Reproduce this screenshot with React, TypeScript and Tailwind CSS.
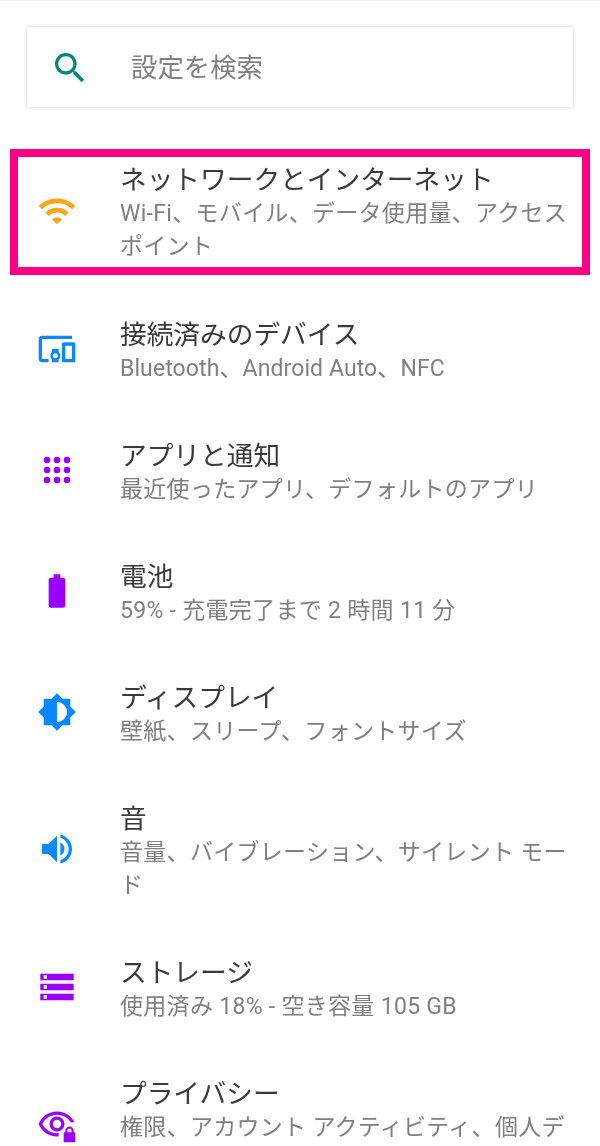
import type { ReactNode } from "react";

const Icon = ({ className, children }: { className: string; children: ReactNode }) => (
  <svg viewBox="0 0 24 24" fill="currentColor" className={className}>
    {children}
  </svg>
);

const blue = "w-10 h-10 text-[#0a88ff]";
const purple = "w-10 h-10 text-[#9900ff]";

const rows = [
  {
    title: "接続済みのデバイス",
    sub: "Bluetooth、Android Auto、NFC",
    subClass: "tracking-[0.1px]",
    icon: (
      <Icon className={blue}>
        <path d="M3 6h18V4H3c-1.1 0-2 .9-2 2v12c0 1.1.9 2 2 2h4v-2H3V6zm10 6H9v1.78c-.61.55-1 1.33-1 2.22s.39 1.67 1 2.22V20h4v-1.78c.61-.55 1-1.34 1-2.22s-.39-1.67-1-2.22V12zm-2 5.5c-.83 0-1.5-.67-1.5-1.5s.67-1.5 1.5-1.5 1.5.67 1.5 1.5-.67 1.5-1.5 1.5zM22 8h-6c-.5 0-1 .5-1 1v10c0 .5.5 1 1 1h6c.5 0 1-.5 1-1V9c0-.5-.5-1-1-1zm-1 10h-4v-8h4v8z" />
      </Icon>
    ),
  },
  {
    title: "アプリと通知",
    sub: "最近使ったアプリ、デフォルトのアプリ",
    icon: (
      <Icon className={purple}>
        {[6, 12, 18].map((y) =>
          [6, 12, 18].map((x) => <circle key={`${x}-${y}`} cx={x} cy={y} r="2" />)
        )}
      </Icon>
    ),
  },
  {
    title: "電池",
    sub: "59% - 充電完了まで 2 時間 11 分",
    icon: (
      <Icon className={purple}>
        <path d="M15.67 4H14V2h-4v2H8.33C7.6 4 7 4.6 7 5.33v15.33C7 21.4 7.6 22 8.33 22h7.33c.74 0 1.34-.6 1.34-1.33V5.33C17 4.6 16.4 4 15.67 4z" />
      </Icon>
    ),
  },
  {
    title: "ディスプレイ",
    sub: "壁紙、スリープ、フォントサイズ",
    icon: (
      <Icon className={blue}>
        <path d="M20 15.31L23.31 12 20 8.69V4h-4.69L12 .69 8.69 4H4v4.69L.69 12 4 15.31V20h4.69L12 23.31 15.31 20H20v-4.69zM12 18V6c3.31 0 6 2.69 6 6s-2.69 6-6 6z" />
      </Icon>
    ),
  },
  {
    title: "音",
    sub: "音量、バイブレーション、サイレント モード",
    icon: (
      <Icon className={blue}>
        <path d="M3 9v6h4l5 5V4L7 9H3zm13.5 3c0-1.77-1.02-3.29-2.5-4.03v8.05c1.48-.73 2.5-2.25 2.5-4.02zM14 3.23v2.06c2.89.86 5 3.54 5 6.71s-2.11 5.85-5 6.71v2.06c4.01-.91 7-4.49 7-8.77s-2.99-7.86-7-8.77z" />
      </Icon>
    ),
  },
  {
    title: "ストレージ",
    sub: "使用済み 18% - 空き容量 105 GB",
    icon: (
      <Icon className={purple}>
        <path d="M2 20h20v-4H2v4zm2-3h2v2H4v-2zM2 4v4h20V4H2zm4 3H4V5h2v2zm-4 7h20v-4H2v4zm2-3h2v2H4v-2z" />
      </Icon>
    ),
  },
  {
    title: "プライバシー",
    sub: "権限、アカウント アクティビティ、個人データ",
    icon: (
      <Icon className={purple}>
        <path d="M12 4.5C7 4.5 2.73 7.61 1 12c1.73 4.39 6 7.5 11 7.5.34 0 .67-.02 1-.05v-2.02c-.33.04-.66.07-1 .07-3.79 0-7.17-2.13-8.82-5.5C4.83 8.63 8.21 6.5 12 6.5c3.4 0 6.47 1.72 8.25 4.5h2.3C20.6 7.2 16.6 4.5 12 4.5z" />
        <path d="M12 7.5a4.5 4.5 0 1 0 0 9 4.5 4.5 0 0 0 0-9zm0 7a2.5 2.5 0 1 1 0-5 2.5 2.5 0 0 1 0 5z" />
        <path d="M22 17v-1a2.5 2.5 0 0 0-5 0v1h-.5a.5.5 0 0 0-.5.5v5a.5.5 0 0 0 .5.5h6a.5.5 0 0 0 .5-.5v-5a.5.5 0 0 0-.5-.5H22zm-1.2 0h-2.6v-1a1.3 1.3 0 0 1 2.6 0v1z" />
      </Icon>
    ),
  },
];

const Text = ({ title, sub, subClass }: { title: string; sub: string; subClass?: string }) => (
  <div className="flex-1 min-w-0">
    <div className="pt-[1px] text-[26.7px] leading-[34px] text-[#3a3a3a]">{title}</div>
    <div className={`text-[23px] leading-[33px] text-[#808080] ${subClass ?? "tracking-[0.3px]"}`}>{sub}</div>
  </div>
);

export default function App() {
  return (
    <div className="w-[600px] h-[1146px] overflow-hidden bg-white border-t border-[#f0f0f0] blur-[0.5px] font-['Roboto','Noto_Sans_CJK_JP',sans-serif]">
      <div className="mx-[27px] mt-[26px] h-[80px] flex items-center bg-white rounded-[2px] shadow-[0_0_4px_rgba(0,0,0,0.2)]">
        <svg viewBox="0 0 24 24" fill="currentColor" className="w-10 h-10 ml-[23px] mt-[2px] text-[#00897b]">
          <path d="M15.5 14h-.79l-.28-.27C15.41 12.59 16 11.11 16 9.5 16 5.91 13.09 3 9.5 3S3 5.91 3 9.5 5.91 16 9.5 16c1.61 0 3.09-.59 4.23-1.57l.27.28v.79l5 4.99L20.49 19l-4.99-5zm-6 0C7.01 14 5 11.99 5 9.5S7.01 5 9.5 5 14 7.01 14 9.5 11.99 14 9.5 14z" />
        </svg>
        <span className="ml-[41px] pt-[4px] text-[26.4px] text-[#808080]">設定を検索</span>
      </div>

      <div className="mt-[42px] mx-[10px] h-[126px] border-8 border-[#ff0084] flex items-center pl-[19px] pr-[6px]">
        <Icon className="w-10 h-10 mr-[43px] mb-[2px] text-[#ffa514]">
          <path d="M1 9l2 2c4.97-4.97 13.03-4.97 18 0l2-2C16.93 2.93 7.08 2.93 1 9zm8 8l3 3 3-3c-1.65-1.66-4.34-1.66-6 0zm-4-4l2 2c2.76-2.76 7.24-2.76 10 0l2-2C15.14 9.14 8.87 9.14 5 13z" />
        </Icon>
        <Text title="ネットワークとインターネット" sub="Wi-Fi、モバイル、データ使用量、アクセスポイント" />
      </div>

      <div className="mt-[14px]">
        {rows.map((row) => (
          <div key={row.title} className="flex items-center pl-[37px] pr-[20px] pt-[28px] pb-[25px]">
            <div className="mr-[43px] -mt-[5px] shrink-0">{row.icon}</div>
            <Text title={row.title} sub={row.sub} subClass={row.subClass} />
          </div>
        ))}
      </div>
    </div>
  );
}
